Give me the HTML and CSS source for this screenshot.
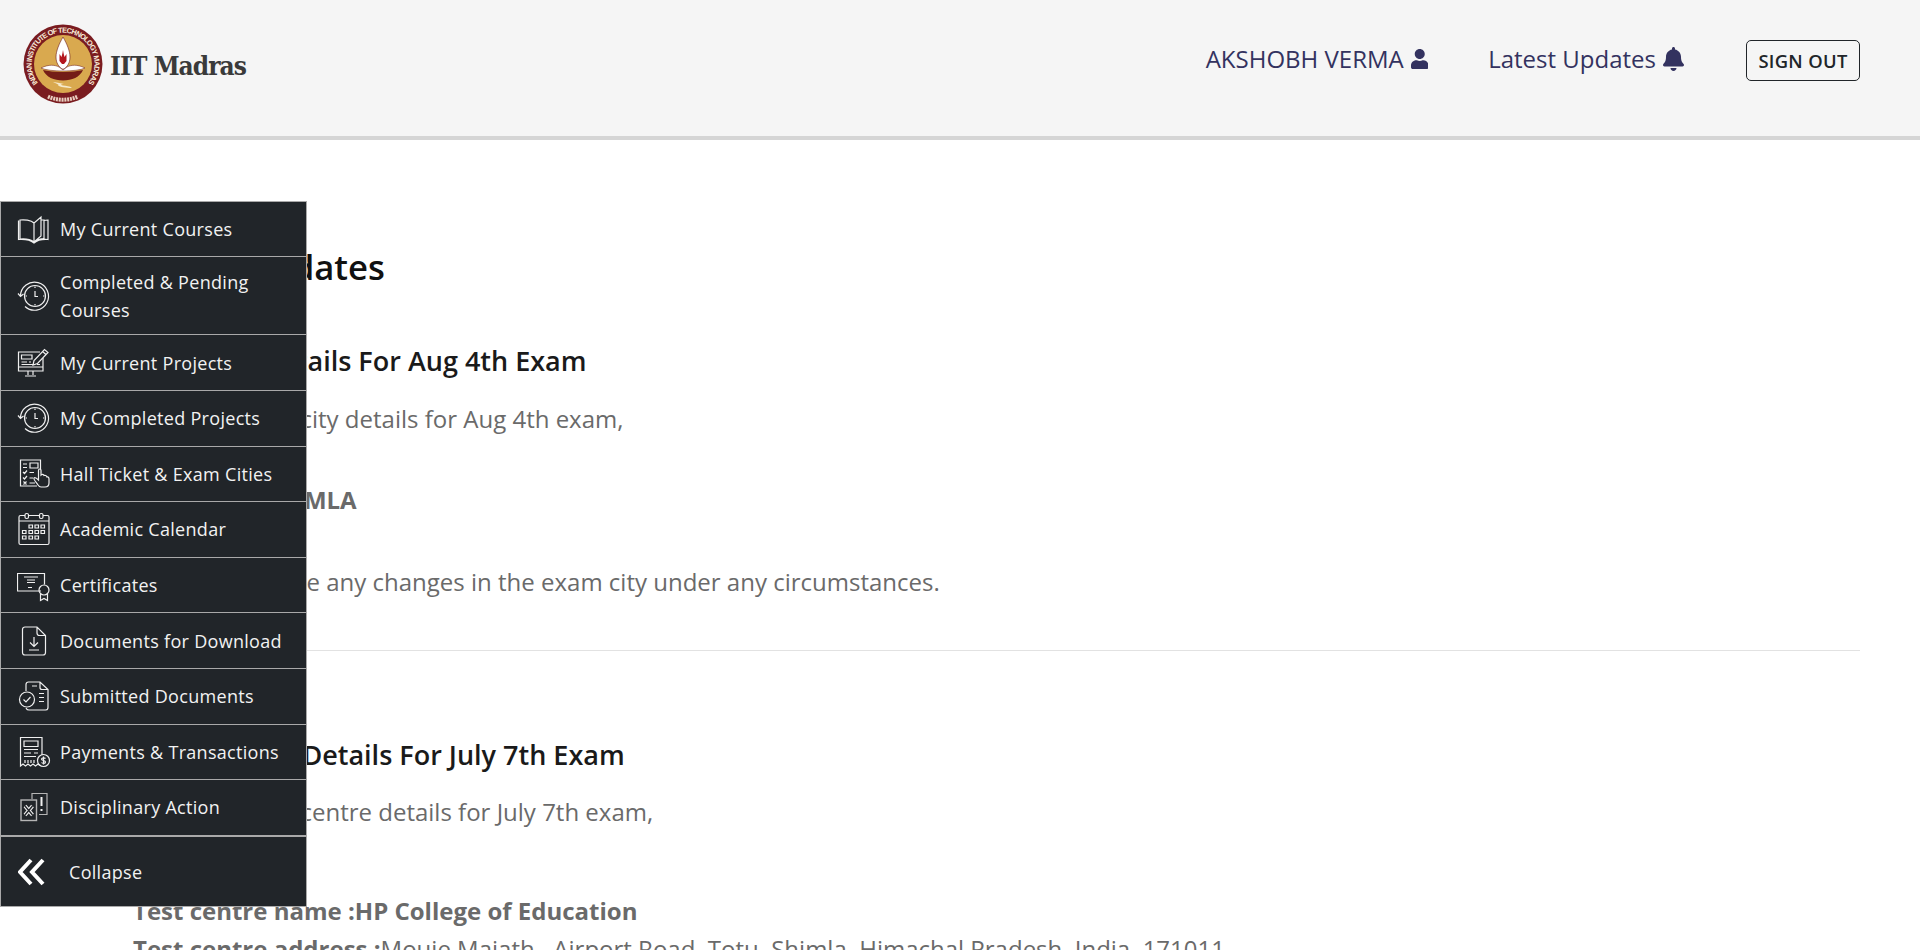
FILE: index.html
```html
<!DOCTYPE html>
<html lang="en">

<head>
    <meta charset="UTF-8">
    <meta name="viewport" content="width=device-width, initial-scale=1.0">
    <title>Latest Updates - IIT Madras</title>
    <link rel="stylesheet" href="styles.css">
</head>
<body>
    <header class="topbar">
        <a class="brand" href="#">
            <svg class="brand-logo" viewBox="-40 -40 80 80">
                <circle r="39.5" fill="#7a1c20"/>
                <circle r="29" fill="#d9a94f"/>
                <path id="seal-arc" d="M-25 19A31.4 31.4 0 1 1 25 19" fill="none"/>
                <text class="seal-text"><textPath href="#seal-arc" textLength="139">INDIAN INSTITUTE OF TECHNOLOGY MADRAS</textPath></text>
                <path d="M-15 32.5A36 36 0 0 0 15 32.5" fill="none" stroke="#e9cfc0" stroke-width="4" stroke-dasharray="2 .8"/>
                <path d="M0-27C4-20 7-13 7-7 7-1 4 3 1 5H-1C-4 3-7-1-7-7-7-13-4-20 0-27Z" fill="#fff" stroke="#6b1a1c" stroke-width=".6"/>
                <path d="M-3.500-10-1.500-7-.5-11 0-14 .5-11 1.500-7 3.500-10 3.500-3 1 0H-1L-3.500-3Z" fill="#b3151d"/>
                <path d="M-22 4C-14 0-8 1-4 3L0 6 4 3C8 1 14 0 22 4 14 8-14 8-22 4Z" fill="#fff" stroke="#6b1a1c" stroke-width=".5"/>
                <path d="M-20 6C-10 8.500 10 8.500 20 6 17 13 9 16.500 0 16.500-9 16.500-17 13-20 6Z" fill="#741d17"/>
                <path d="M-10 18C-5 19-2 19 1 20-2 20-3 21 0 21.500 3 22 7 22 9 24 3 24-3 23-5 21.500-3 21-6 20-10 18Z" fill="#f6eacb"/>
            </svg>
            <span class="brand-name">IIT Madras</span>
        </a>
        <nav class="topnav">
            <a class="topnav-link" href="#">AKSHOBH VERMA
                <svg class="user-icon" viewBox="0 0 448 512"><path d="M224 256c70.700 0 128-57.300 128-128S294.700 0 224 0 96 57.300 96 128s57.300 128 128 128zm89.600 32h-16.700c-22.200 10.200-46.900 16-72.900 16s-50.600-5.800-72.900-16h-16.700C60.200 288 0 348.200 0 422.400V464c0 26.500 21.500 48 48 48h352c26.500 0 48-21.500 48-48v-41.600c0-74.200-60.200-134.400-134.400-134.400z"/></svg>
            </a>
            <a class="topnav-link" href="#">Latest Updates
                <svg class="bell-icon" viewBox="0 0 448 512"><path d="M224 512c35.320 0 63.970-28.650 63.970-64H160.030c0 35.350 28.650 64 63.970 64zm215.390-149.710c-19.320-20.760-55.470-51.990-55.470-154.290 0-77.700-54.480-139.900-127.940-155.160V32c0-17.670-14.320-32-31.980-32s-31.980 14.330-31.980 32v20.840C118.560 68.100 64.080 130.300 64.080 208c0 102.300-36.150 133.530-55.470 154.290-6 6.450-8.660 14.160-8.610 21.710.11 16.400 12.980 32 32.100 32h383.800c19.120 0 32-15.600 32.100-32 .05-7.550-2.610-15.260-8.610-21.710z"/></svg>
            </a>
            <button class="signout" type="button">SIGN OUT</button>
        </nav>
    </header>

    <aside class="sidebar">
        <a class="side-item" href="#">
            <svg class="side-icon" viewBox="0 0 34 34"><path d="M17 30V11C14 8 7 7.500 3 8V27C8 26.500 13 27 17 30ZM17 30V11L24 5V24L17 30ZM24 8H27V26.500C23 26.500 20 27.500 17 30M27 8.500C28.500 8 30 8 31 8V27.500C25 27 20 28.500 17 31 14 28.500 8 27 1.500 27.500V8.500"/></svg>
            <span>My Current Courses</span>
        </a>
        <a class="side-item" href="#">
            <svg class="side-icon" viewBox="0 0 34 34"><path d="M3.500 17A14 14 0 1 1 8 27.500M1 14.500 3.500 17.500 6.500 15"/><circle cx="18" cy="17" r="10.500"/><path d="M18 12V17.500H21M18 7.500V9M18 25V26.500M8.500 17H10M26 17H27.500"/></svg>
            <span>Completed &amp; Pending<br>Courses</span>
        </a>
        <a class="side-item" href="#">
            <svg class="side-icon" viewBox="0 0 34 34"><path d="M26 12V25H1.500V6H23M1.500 21H26M11 25V29M16 25V29M8 30H19"/><path d="M4.500 9H15V13H4.500ZM4.500 16H10M12 16H14M4.500 18.500H18M20 18.500H23"/><path d="M16 19 17 14.500 27.500 3.500 31 6.500 20.500 17.500ZM25.500 5.500 29 8.500"/></svg>
            <span>My Current Projects</span>
        </a>
        <a class="side-item" href="#">
            <svg class="side-icon" viewBox="0 0 34 34"><path d="M3.500 17A14 14 0 1 1 8 27.500M1 14.500 3.500 17.500 6.500 15"/><circle cx="18" cy="17" r="10.500"/><path d="M18 12V17.500H21M18 7.500V9M18 25V26.500M8.500 17H10M26 17H27.500"/></svg>
            <span>My Completed Projects</span>
        </a>
        <a class="side-item" href="#">
            <svg class="side-icon" viewBox="0 0 34 34"><path d="M20 29H3.500V3H23.500V16M6 7H10M6 10.500H10M13 6H21V11H13ZM6 15 7.500 16.500 10 13.500M6 20.500 7.500 22 10 19M6.500 24.500 9.500 27.500M9.500 24.500 6.500 27.500M12.500 15.500H17M12.500 21H16M12.500 26H18"/><path d="M21 28C19 25 16 22 17 21 18 20 20 21.500 21.500 23V13.500C21.500 11.500 24 11.500 24 13.500V18C25 17 26.500 17 27 18.500 28 18 29.500 18.500 30 20 31 19.500 32 20.500 32 22V26C32 28.500 30.500 30 28 30H24C23 30 22 29.500 21 28Z" fill="#212529"/></svg>
            <span>Hall Ticket &amp; Exam Cities</span>
        </a>
        <a class="side-item" href="#">
            <svg class="side-icon" viewBox="0 0 34 34"><path d="M8 3.500H3.500C2.500 3.500 2 4 2 5V31C2 32 2.500 32.500 3.500 32.500H30.500C31.500 32.500 32 32 32 31V5C32 4 31.500 3.500 30.500 3.500H26M11.500 3.500H22.500M2 9H32"/><rect x="8" y="1.500" width="3.500" height="5" rx="1.500"/><rect x="22.500" y="1.500" width="3.500" height="5" rx="1.500"/><path d="M12 13H15.500V16H12ZM18 13H21.500V16H18ZM24 13H27.500V16H24ZM5.500 18.500H9V21.500H5.500ZM12 18.500H15.500V21.500H12ZM18 18.500H21.500V21.500H18ZM24 18.500H27.500V21.500H24ZM5.500 24H9V27H5.500ZM12 24H15.500V27H12ZM18 24H21.500V27H18Z"/></svg>
            <span>Academic Calendar</span>
        </a>
        <a class="side-item" href="#">
            <svg class="side-icon" viewBox="0 0 34 34"><path d="M24 23H.5V5.500H27.500V16.500M7 9H21M10 12H18M10 14.500H18M11 19.500H15"/><circle cx="27" cy="22" r="5"/><path d="M23.500 26V32.500L27 30.500 30.500 32.500V26"/></svg>
            <span>Certificates</span>
        </a>
        <a class="side-item" href="#">
            <svg class="side-icon" viewBox="0 0 34 34"><path d="M20 3H8C6.500 3 5.500 4 5.500 5.500V28.500C5.500 30 6.500 31 8 31H26C27.500 31 28.500 30 28.500 28.500V11.500ZM20 3V9C20 10.500 21 11.500 22.500 11.500H28.500M17 13V22M13 18.500 17 22.500 21 18.500M12 26H22"/></svg>
            <span>Documents for Download</span>
        </a>
        <a class="side-item" href="#">
            <svg class="side-icon" viewBox="0 0 34 34"><path d="M9 12V5.500C9 4 10 3 11.500 3H23L31 10.500V28.500C31 30 30 31 28.500 31H12C10.500 31 9.500 30.500 9 29M23 3V8.500C23 10 24 10.500 25 10.500H31M15 7H20M22 14.500H27M22 18.500H27M22 22.500H27"/><circle cx="10" cy="20.500" r="7.500"/><path d="M6.500 20.500 9 23 13.500 18"/></svg>
            <span>Submitted Documents</span>
        </a>
        <a class="side-item" href="#">
            <svg class="side-icon" viewBox="0 0 34 34"><path d="M25 20V2.500H3.500V31L6 29 8.500 31 11 29 13.500 31 16 29 18.500 31 21 29 23 30.500"/><path d="M7 6H21V11.500H7ZM7 14.500H21M7 18H14M17 18H21M7 21.500H19M8 25V28M11 25V28M14 25V28M17 25V28"/><circle cx="26.500" cy="25.500" r="6"/><path d="M28.500 23.500C27.500 22.500 24.500 22.500 24.500 24.300 24.500 26 28.500 25 28.500 27 28.500 28.800 25.500 28.800 24.500 27.500M26.500 21.500V29.500"/></svg>
            <span>Payments &amp; Transactions</span>
        </a>
        <a class="side-item" href="#">
            <svg class="side-icon" viewBox="0 0 34 34"><path d="M15 9V3.500H30V24.500H22" stroke="#b5b5b5"/><rect x="4" y="10" width="15.500" height="20.500" stroke="#b5b5b5" stroke-width="1.400"/><path d="M24.500 7V16M24.500 19V21" stroke-width="2"/><path d="M8 16 15.500 25M15.500 16 8 25" stroke-width="3.600"/><path d="M8 16 15.500 25M15.500 16 8 25" stroke="#212529" stroke-width="1.400"/></svg>
            <span>Disciplinary Action</span>
        </a>
        <a class="side-collapse" href="#">
            <svg class="collapse-icon" viewBox="0 0 28 28"><path d="M13 2 2 14 13 26M25 2 14 14 25 26"/></svg>
            <span>Collapse</span>
        </a>
    </aside>

    <main class="content">
        <h1 class="page-title">Latest Updates</h1>

        <section class="update">
            <h3 class="update-title">Exam city details For Aug 4th Exam</h3>
            <p class="update-text">Hi , your exam city details for Aug 4th exam,</p>
            <p class="update-text city-line"><b>Exam City: SHIMLA</b></p>
            <p class="update-text note-line">We cannot make any changes in the exam city under any circumstances.</p>
        </section>
        <hr class="update-rule">
        <section class="update">
            <h3 class="update-title">Exam centre Details For July 7th Exam</h3>
            <p class="update-text">Hi , your exam centre details for July 7th exam,</p>
            <p class="update-text centre-name"><b>Test centre name :HP College of Education</b></p>
            <p class="update-text"><b>Test centre address :</b>Mouje Majath , Airport Road, Totu, Shimla, Himachal Pradesh, India, 171011</p>
        </section>
    </main>
</body>
</html>
```

FILE: styles.css
```css
html, body {
    height: 950px;
    overflow: hidden;
}

body {
    margin: 0;
    background-color: #fff;
    font-family: "Open Sans", sans-serif;
}

a {
    text-decoration: none;
}

.topbar {
    display: flex;
    justify-content: space-between;
    align-items: center;
    box-sizing: border-box;
    height: 140px;
    padding: 0 60px 8px 23px;
    background-color: #f5f5f5;
    border-bottom: 4px solid #d5d5d5;
}

.brand {
    display: flex;
    align-items: center;
    gap: 7px;
}

.brand-logo {
    width: 80px;
    height: 80px;
}

.seal-text {
    font-family: "Liberation Sans", sans-serif;
    font-size: 7.4px;
    font-weight: bold;
    fill: #f7ead8;
}

.brand-name {
    margin-top: 4px;
    font-family: "DejaVu Serif Condensed", "DejaVu Serif", serif;
    font-stretch: condensed;
    font-size: 26px;
    font-weight: bold;
    letter-spacing: -0.95px;
    color: #3a3a3a;
}

.topnav {
    display: flex;
    align-items: center;
    gap: 60px;
    margin-bottom: 7px;
}

.topnav-link {
    display: flex;
    align-items: center;
    gap: 7px;
    margin-bottom: 4px;
    font-size: 24px;
    color: #33325f;
}

.user-icon {
    height: 20px;
    fill: #33325f;
}

.bell-icon {
    height: 24px;
    fill: #33325f;
}

.signout {
    box-sizing: border-box;
    width: 114px;
    height: 41px;
    margin-left: 2px;
    padding: 0;
    border: 1px solid #212529;
    border-radius: 5px;
    background: transparent;
    font-family: "Open Sans", sans-serif;
    font-size: 18.4px;
    font-weight: 600;
    letter-spacing: 0.3px;
    color: #212529;
}

.sidebar {
    position: fixed;
    top: 201px;
    left: 0;
    box-sizing: border-box;
    width: 307px;
    background-color: #212529;
    border: 1px solid #a9a9a9;
}

.side-item {
    display: flex;
    align-items: center;
    gap: 9px;
    box-sizing: border-box;
    min-height: 55.6px;
    padding: 10.500px 8px 10.500px 16px;
    border-bottom: 1px solid #a9a9a9;
    color: #f2f2f2;
    font-size: 18px;
    letter-spacing: 0.3px;
    line-height: 28px;
}

.side-item:first-child {
    min-height: 55.4px;
}

.side-icon {
    flex: none;
    width: 34px;
    height: 34px;
    margin: -1px 0;
    fill: none;
    stroke: #efefef;
    stroke-width: 1.2;
}

.side-collapse {
    display: flex;
    align-items: center;
    gap: 23px;
    box-sizing: border-box;
    height: 70px;
    padding: 2px 0 0 17px;
    border-top: 1px solid #a9a9a9;
    color: #f2f2f2;
    font-size: 18px;
    letter-spacing: 0.3px;
}

.collapse-icon {
    flex: none;
    width: 28px;
    height: 28px;
    fill: none;
    stroke: #fff;
    stroke-width: 4;
}

.content {
    padding: 107px 60px 0 133px;
}

.page-title {
    margin: 0;
    font-size: 34.7px;
    font-weight: 600;
    line-height: 40px;
    color: #111;
}

.update-title {
    margin: 56px 0 22px;
    font-size: 27px;
    font-weight: 600;
    line-height: 36px;
    color: #1a1a1a;
}

.update-rule + .update .update-title {
    margin-top: 86px;
    margin-bottom: 21px;
}

.update-text {
    margin: 0;
    font-size: 24px;
    line-height: 36px;
    color: #6a6a6a;
}

.city-line {
    margin-top: 45px;
}

.note-line {
    margin-top: 46px;
}

.centre-name {
    margin-top: 63px;
    margin-bottom: 2px;
}

.update-rule {
    margin: 50px 0 0;
    border: 0;
    border-top: 1px solid #e2e2e2;
}
```
